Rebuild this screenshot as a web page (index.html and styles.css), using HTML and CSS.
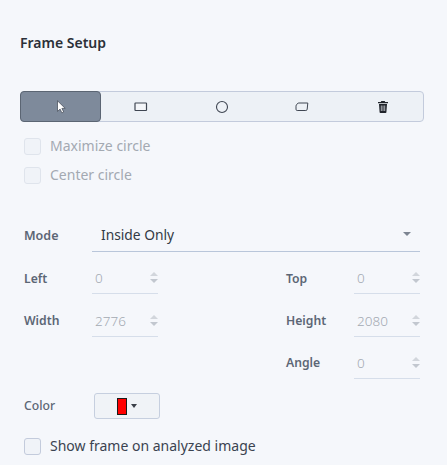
FILE: index.html
```html
<!DOCTYPE html>
<html lang="en">
<head>
<meta charset="utf-8">
<title>Frame Setup</title>
<link rel="stylesheet" href="styles.css">
</head>
<body>
<main class="panel">
  <h1 class="title">Frame Setup</h1>
  <div class="toolbar">
    <button class="tool tool-active" aria-label="Select">
      <svg width="12" height="14" viewBox="0 0 12 14"><path d="M2.500 .8v10.600l2.600-2.300 1.800 3.800 1.800-.9-1.800-3.600h3.300z" fill="#fff" stroke="#3c4450" stroke-width=".7"/></svg>
    </button>
    <button class="tool" aria-label="Rectangle">
      <svg width="14" height="10" viewBox="0 0 14 10"><rect x="1" y="1" width="11.500" height="7.500" rx=".5" fill="#f4f6f9" stroke="#3f4652" stroke-width="1.200"/></svg>
    </button>
    <button class="tool" aria-label="Circle">
      <svg width="14" height="14" viewBox="0 0 14 14"><circle cx="7" cy="7" r="5.500" fill="none" stroke="#3f4652" stroke-width="1.100"/></svg>
    </button>
    <button class="tool" aria-label="Polygon">
      <svg width="14" height="10" viewBox="0 0 14 10"><path d="M3.200 1h9.600l-.6 6.200q-.1 1.300-1.400 1.300H2.200Q1 8.500 1 7.300V4.200Q1 3 2 2.200z" fill="none" stroke="#3f4652" stroke-width="1"/></svg>
    </button>
    <button class="tool" aria-label="Delete">
      <svg width="12" height="13" viewBox="0 0 12 13"><path d="M4.300 1h3.400l.5 1H11v1.200H1V2h2.800zM2 4h8l-.6 8.200q0 .8-.8.800H3.400q-.8 0-.8-.8z" fill="#20242b"/><path d="M4.300 5.500v5.500M6 5.500v5.500M7.700 5.500v5.500" stroke="#e9edf2" stroke-width=".7"/></svg>
    </button>
  </div>

  <div class="circle-options">
    <label class="check check-disabled"><span class="box"></span>Maximize circle</label>
    <label class="check check-disabled"><span class="box"></span>Center circle</label>
  </div>

  <div class="mode-row">
    <span class="label">Mode</span>
    <div class="select">
      <span>Inside Only</span>
      <span class="caret"></span>
    </div>
  </div>

  <div class="fields">
    <div class="field">
      <span class="label">Left</span>
      <div class="number"><span>0</span><span class="spin"><i class="up"></i><i class="down"></i></span></div>
    </div>
    <div class="field">
      <span class="label">Top</span>
      <div class="number"><span>0</span><span class="spin"><i class="up"></i><i class="down"></i></span></div>
    </div>
    <div class="field">
      <span class="label">Width</span>
      <div class="number"><span>2776</span><span class="spin"><i class="up"></i><i class="down"></i></span></div>
    </div>
    <div class="field">
      <span class="label">Height</span>
      <div class="number"><span>2080</span><span class="spin"><i class="up"></i><i class="down"></i></span></div>
    </div>
    <div class="field field-angle">
      <span class="label">Angle</span>
      <div class="number"><span>0</span><span class="spin"><i class="up"></i><i class="down"></i></span></div>
    </div>
  </div>

  <div class="color-row">
    <span class="label label-light">Color</span>
    <button class="color-btn" aria-label="Color"><span class="swatch"></span><span class="mini-caret"></span></button>
  </div>

  <label class="check check-show"><span class="box box-strong"></span>Show frame on analyzed image</label>
</main>
</body>
</html>
```

FILE: styles.css
```css
* { box-sizing: border-box; }
html, body { margin: 0; height: 100%; }
body {
  background: #f5f7fb;
  font-family: "Noto Sans", "Open Sans", sans-serif;
  color: #3b4350;
  overflow: hidden;
}
.panel { padding: 33px 23px 0 20px; }
.title {
  margin: 0;
  font-size: 14px;
  line-height: 20px;
  font-weight: 600;
  color: #2b3038;
}
.toolbar {
  display: flex;
  margin-top: 38px;
  height: 31px;
  border: 1px solid #c3cbdc;
  border-radius: 4px;
  background: #edf1f6;
}
.tool {
  flex: 1 1 0;
  margin: 0;
  padding: 0;
  border: 0;
  background: none;
  display: flex;
  align-items: center;
  justify-content: center;
}
.tool-active {
  margin: -1px 0 -1px -1px;
  flex: 0 0 81px;
  background: #7e8a9b;
  border: 1px solid #5b6573;
  border-radius: 4px;
}
.circle-options {
  display: flex;
  flex-direction: column;
  gap: 9px;
  margin: 14px 0 0 4px;
}
.check {
  display: flex;
  align-items: center;
  gap: 9px;
  height: 20px;
  font-size: 14px;
  line-height: 20px;
}
.check-disabled { color: #a3a9b2; }
.box {
  width: 17px;
  height: 17px;
  border: 1px solid #dfe4ec;
  border-radius: 3px;
  background: #f0f3f8;
}
.box-strong { border-color: #c3cbdc; }
.mode-row {
  display: flex;
  align-items: center;
  height: 33px;
  margin: 34px 4px 0 4px;
  padding-bottom: 1px;
}
.label {
  font-size: 12.200px;
  line-height: 18px;
  font-weight: 600;
  color: #5c6675;
}
.mode-row .label { width: 68px; flex: none; font-size: 12.500px; padding-top: 1px; }
.select {
  flex: 1;
  align-self: stretch;
  display: flex;
  align-items: center;
  justify-content: space-between;
  padding: 0 9px 2px 9px;
  margin-bottom: -1px;
  border-bottom: 1px solid #b9c6da;
  font-size: 13.800px;
  color: #333a45;
}
.caret {
  width: 0;
  height: 0;
  border-left: 4px solid transparent;
  border-right: 4px solid transparent;
  border-top: 4px solid #7d8592;
}
.fields {
  display: grid;
  grid-template-columns: 1fr 134px;
  row-gap: 10px;
  margin: 9px 4px 0 4px;
}
.field {
  display: flex;
  align-items: center;
  height: 33px;
}
.field .label { width: 68px; flex: none; padding-top: 1px; }
.field:first-child .label, .field:nth-child(2) .label { padding-top: 2px; }
.field-angle { grid-column: 2; margin-top: -1px; }
.number {
  width: 66px;
  height: 33px;
  display: flex;
  align-items: center;
  justify-content: space-between;
  padding: 2px 0 1px 3px;
  border-bottom: 1px solid #d6deea;
  font-size: 13.500px;
  font-weight: 300;
  color: #a3a9b2;
}
.spin {
  display: flex;
  flex-direction: column;
  gap: 3px;
}
.spin i { display: block; width: 0; height: 0; border-left: 4px solid transparent; border-right: 4px solid transparent; }
.spin .up { border-bottom: 4px solid #d2d6dc; }
.spin .down { border-top: 4px solid #c2c7cf; }
.color-row {
  display: flex;
  align-items: center;
  height: 26px;
  margin: 14px 0 0 4px;
}
.label-light { font-weight: 500; width: 70px; flex: none; }
.color-btn {
  width: 66px;
  height: 26px;
  margin: 0;
  padding: 0;
  display: flex;
  align-items: center;
  justify-content: center;
  gap: 4px;
  background: #f0f3f7;
  border: 1px solid #c6cfdf;
  border-radius: 3px;
}
.swatch {
  width: 10px;
  height: 17px;
  background: #ff0000;
  border: 1px solid #1a1a1a;
}
.mini-caret {
  width: 0;
  height: 0;
  border-left: 3.500px solid transparent;
  border-right: 3.500px solid transparent;
  border-top: 4px solid #3a3f48;
}
.check-show { margin: 17px 0 0 4px; color: #3b4350; }
```
